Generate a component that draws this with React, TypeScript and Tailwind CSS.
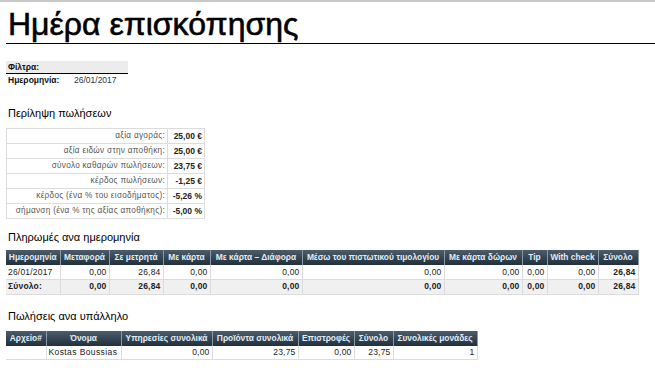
import React from 'react';

const summary = [
  ['αξία αγοράς:', '25,00 €'],
  ['αξία ειδών στην αποθήκη:', '25,00 €'],
  ['σύνολο καθαρών πωλήσεων:', '23,75 €'],
  ['κέρδος πωλήσεων:', '-1,25 €'],
  ['κέρδος (ένα % του εισοδήματος):', '-5,26 %'],
  ['σήμανση (ένα % της αξίας αποθήκης):', '-5,00 %'],
];

const payCols = [
  { label: 'Ημερομηνία', w: 'w-[54px]' },
  { label: 'Μεταφορά', w: 'w-[49px]' },
  { label: 'Σε μετρητά', w: 'w-[54px]' },
  { label: 'Με κάρτα', w: 'w-[47px]' },
  { label: 'Με κάρτα – Διάφορα', w: 'w-[92px]' },
  { label: 'Μέσω του πιστωτικού τιμολογίου', w: 'w-[142px]' },
  { label: 'Με κάρτα δώρων', w: 'w-[78px]' },
  { label: 'Tip', w: 'w-[25px]' },
  { label: 'With check', w: 'w-[51px]' },
  { label: 'Σύνολο', w: 'w-[40px]' },
];

const empCols = [
  { label: 'Αρχείο#', w: 'w-[40px]' },
  { label: 'Όνομα', w: 'w-[75px]' },
  { label: 'Υπηρεσίες συνολικά', w: 'w-[91px]' },
  { label: 'Προϊόντα συνολικά', w: 'w-[86px]' },
  { label: 'Επιστροφές', w: 'w-[56px]' },
  { label: 'Σύνολο', w: 'w-[39px]' },
  { label: 'Συνολικές μονάδες', w: 'w-[84px]' },
];

const th = 'h-[15px] px-[2px] text-[8.4px] font-bold text-[#e3edf5] bg-gradient-to-b from-[#4b5d6c] to-[#22303c] border-r border-[#8a99a6] text-center whitespace-nowrap overflow-hidden leading-none';
const cell = 'h-[14px] px-[2px] text-[8.5px] text-[#222] border-r border-b border-[#dcdcdc] whitespace-nowrap leading-none tracking-[0.2px]';
const td = `${cell} text-right`;
const tdL = `${cell} text-left`;

function App() {
  return (
    <div className="w-[655px] h-[386px] overflow-hidden bg-white text-[#111] font-['Liberation_Sans',Arial,sans-serif] border-t-2 border-[#c8c8c8]">
      <div className="pl-[6px]">
        <h1 className="text-[32px] leading-[38px] pt-[3px] pl-[2px] text-black border-b border-black [-webkit-text-stroke:0.6px_black]">
          Ημέρα επισκόπησης
        </h1>

        {/* Filters */}
        <div className="mt-[17px] w-[122px]">
          <div className="h-[13px] bg-[#ececec] border-b border-black pl-[2px] text-[8.5px] font-bold leading-[13px]">Φίλτρα:</div>
          <div className="flex text-[8.5px] leading-[12px] pl-[2px]">
            <span className="font-bold w-[66px]">Ημερομηνία:</span>
            <span className="text-[#333]">26/01/2017</span>
          </div>
        </div>

        <h2 className="mt-[20px] text-[11px] leading-[14px] pl-[2px] text-black">Περίληψη πωλήσεων</h2>

        <table className="mt-[8px] border-collapse border border-[#dcdcdc]">
          <tbody>
            {summary.map(([k, v]) => (
              <tr key={k}>
                <td className="h-[15px] w-[161px] pr-[2px] text-right text-[8.2px] text-[#555] tracking-[0.3px] border-r border-b border-[#dcdcdc] leading-none whitespace-nowrap">{k}</td>
                <td className="h-[15px] w-[37px] px-[2px] text-right text-[8.5px] font-bold text-[#222] border-b border-[#dcdcdc] leading-none whitespace-nowrap">{v}</td>
              </tr>
            ))}
          </tbody>
        </table>

        <h2 className="mt-[11px] text-[11px] leading-[14px] pl-[2px] text-black">Πληρωμές ανα ημερομηνία</h2>

        <table className="mt-[6px] border-collapse table-fixed w-[632px]">
          <thead>
            <tr>
              {payCols.map((c) => (
                <th key={c.label} className={`${th} ${c.w}`}>{c.label}</th>
              ))}
            </tr>
          </thead>
          <tbody>
            <tr>
              <td className={tdL}>26/01/2017</td>
              <td className={td}>0,00</td>
              <td className={td}>26,84</td>
              <td className={td}>0,00</td>
              <td className={td}>0,00</td>
              <td className={td}>0,00</td>
              <td className={td}>0,00</td>
              <td className={td}>0,00</td>
              <td className={td}>0,00</td>
              <td className={`${td} font-bold`}>26,84</td>
            </tr>
            <tr className="bg-[#f0f0f0] font-bold">
              <td className={`${tdL} h-[15px]`}>Σύνολο:</td>
              <td className={td}>0,00</td>
              <td className={td}>26,84</td>
              <td className={td}>0,00</td>
              <td className={td}>0,00</td>
              <td className={td}>0,00</td>
              <td className={td}>0,00</td>
              <td className={td}>0,00</td>
              <td className={td}>0,00</td>
              <td className={td}>26,84</td>
            </tr>
          </tbody>
        </table>

        <h2 className="mt-[14px] text-[11px] leading-[14px] pl-[2px] text-black">Πωλήσεις ανα υπάλληλο</h2>

        <table className="mt-[8px] border-collapse table-fixed w-[471px]">
          <thead>
            <tr>
              {empCols.map((c) => (
                <th key={c.label} className={`${th} ${c.w}`}>{c.label}</th>
              ))}
            </tr>
          </thead>
          <tbody>
            <tr>
              <td className={td}></td>
              <td className={`${tdL} tracking-[0.4px]`}>Kostas Boussias</td>
              <td className={td}>0,00</td>
              <td className={td}>23,75</td>
              <td className={td}>0,00</td>
              <td className={td}>23,75</td>
              <td className={td}>1</td>
            </tr>
          </tbody>
        </table>
      </div>
    </div>
  );
}

export default App;
